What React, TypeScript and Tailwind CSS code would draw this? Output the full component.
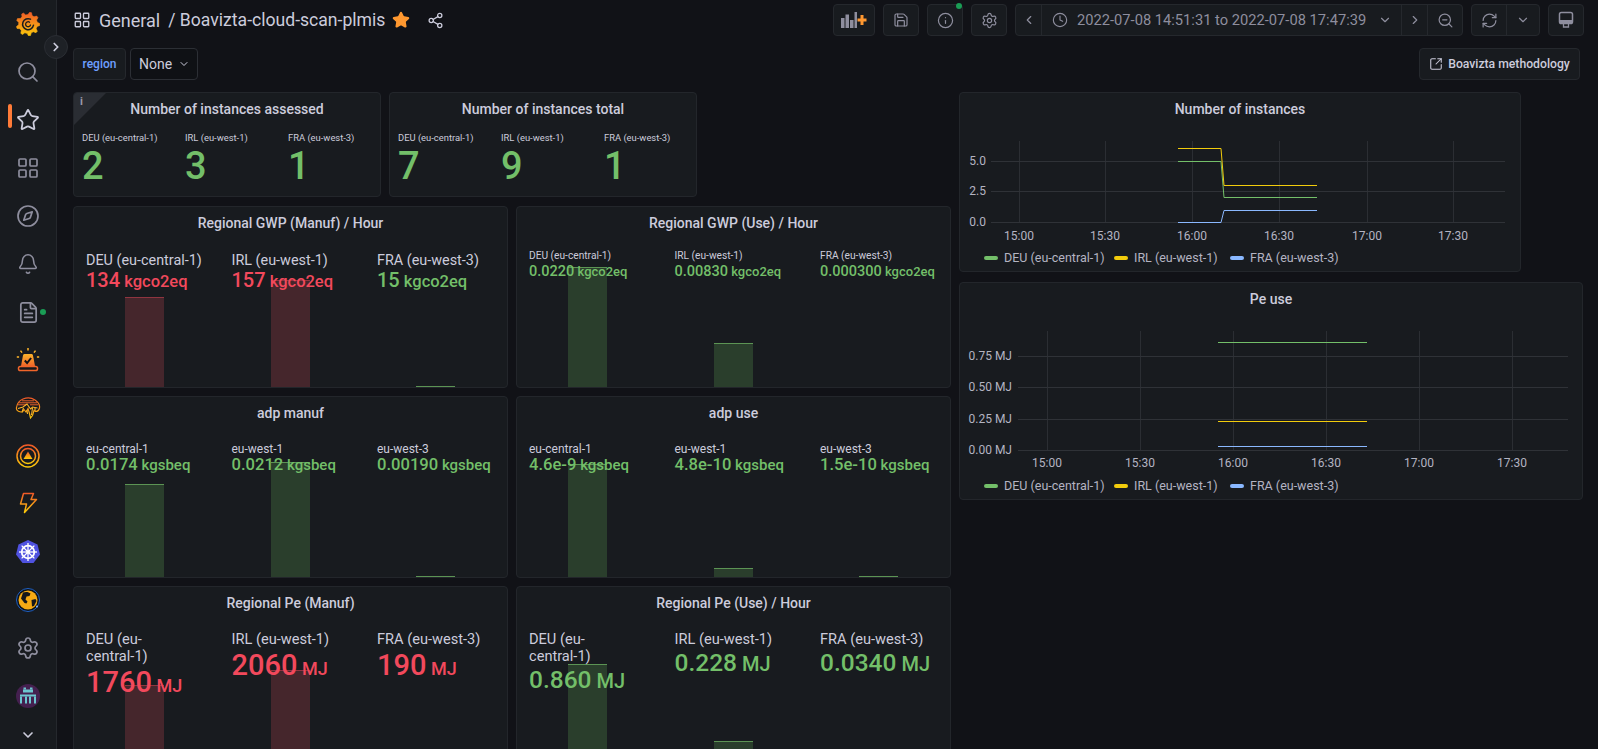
import React from "react";
import {
  LayoutGrid, Search, Star, Compass, Bell, FileText, Settings, ChevronRight, ChevronDown, ChevronLeft,
  Share2, Save, Info, Clock, ZoomOut, RefreshCw, SquareArrowOutUpRight,
} from "lucide-react";

const GREEN = "#73bf69";
const RED = "#f2495c";
const YELLOW = "#f2cc0c";
const BLUE = "#8ab8ff";

function GradDef({ id }: { id: string }) {
  return (
    <defs>
      <linearGradient id={id} x1="0" y1="1" x2="0" y2="0">
        <stop offset="0" stopColor="#fbca0a" />
        <stop offset="1" stopColor="#f05a28" />
      </linearGradient>
    </defs>
  );
}

function GrafanaLogo() {
  const pts: string[] = [];
  const n = 9;
  for (let i = 0; i < n; i++) {
    const a = (i / n) * Math.PI * 2 - 1.35;
    const step = (Math.PI * 2) / n;
    const p = (r: number, d: number) => `${(12 + r * Math.cos(a + d * step)).toFixed(2)},${(12 + r * Math.sin(a + d * step)).toFixed(2)}`;
    pts.push(p(9.4, -0.32), p(11.8, -0.12), p(11.8, 0.12), p(9.4, 0.32));
  }
  return (
    <svg width="24" height="24" viewBox="0 0 24 24">
      <defs>
        <linearGradient id="gl" gradientUnits="userSpaceOnUse" x1="12" y1="24" x2="12" y2="0">
          <stop offset="0" stopColor="#fbca0a" />
          <stop offset="1" stopColor="#f05a28" />
        </linearGradient>
      </defs>
      <polygon points={pts.join(" ")} fill="url(#gl)" stroke="url(#gl)" strokeWidth="0.6" strokeLinejoin="round" />
      <path d="M14.500 7.200A5.500 5.500 0 1 0 17.500 13.200" fill="none" stroke="#1a1c20" strokeWidth="1.500" strokeLinecap="round" />
      <path d="M13.600 10.200A2.500 2.500 0 1 0 14.500 13" fill="none" stroke="#1a1c20" strokeWidth="1.300" strokeLinecap="round" />
    </svg>
  );
}

function AlertIcon() {
  return (
    <svg width="24" height="24" viewBox="0 0 24 24">
      <defs>
        <linearGradient id="al" x1="0" y1="0" x2="0" y2="1">
          <stop offset="0" stopColor="#fbb42a" />
          <stop offset="1" stopColor="#f0652a" />
        </linearGradient>
      </defs>
      <path d="M8.500 6h7a1.500 1.500 0 0 1 1.400 1.100L19 18H5L7.100 7.100A1.500 1.500 0 0 1 8.500 6z" fill="url(#al)" />
      <rect x="2.500" y="18.500" width="19" height="4" rx="1.800" fill="#15171b" stroke="#f0652a" strokeWidth="1.500" />
      <path d="M8.800 12.500l2.300 2.500 4-5" stroke="#111217" strokeWidth="2" fill="none" />
      <path d="M12 0v2.600M4.500 2.600l1.500 2M19.500 2.600l-1.500 2M0.800 9h2.300M20.900 9h2.300" stroke="#fbb42a" strokeWidth="1.500" />
    </svg>
  );
}

function BrainIcon() {
  return (
    <svg width="26" height="24" viewBox="0 0 26 24">
      <GradDef id="br" />
      <path
        d="M6 16c-3 0-5-2-4.500-4.500C2 8 3 5 8 3c4-1.500 9-1 12 1 3 2 5 5 4.500 8-.5 2-2 3.500-4 3.500l-1.500-1-1.500 5-2 2.500-1-4.500-1.500-5-2 3.500-2-2.500-1.500 2.500z"
        fill="#15171b"
        stroke="url(#br)"
        strokeWidth="1.200"
      />
      <path d="M7 4.800h12M4 6.800h18M3 8.800h8M15 8.800h8" stroke="#e8622c" strokeWidth="1" />
      <path d="M3 12.500l5-1.500 4-3 3.500 5 2-2 5 1M7 16l1.500-4M12 14l.5 4M16.500 19l1-7M20 15l0-3" fill="none" stroke="#fbb42a" strokeWidth="1.100" />
    </svg>
  );
}

function TriangleIcon() {
  return (
    <svg width="24" height="24" viewBox="0 0 24 24">
      <GradDef id="tr" />
      <circle cx="12" cy="12" r="11" fill="none" stroke="url(#tr)" strokeWidth="1.500" />
      <circle cx="12" cy="12" r="7.500" fill="none" stroke="url(#tr)" strokeWidth="1.500" />
      <path d="M12 7.500l4.500 7.500h-9z" fill="url(#tr)" />
    </svg>
  );
}

function BoltIcon() {
  return (
    <svg width="24" height="24" viewBox="0 0 24 24">
      <GradDef id="bo" />
      <path d="M7.500 1.500h10l-2.500 6h5.500L8.500 20.500l2-8.500H4.500z" fill="none" stroke="url(#bo)" strokeWidth="1.500" strokeLinejoin="round" />
    </svg>
  );
}

function KubeIcon() {
  const spokes = [0, 1, 2, 3, 4, 5, 6, 7].map((i) => (i / 8) * Math.PI * 2);
  return (
    <svg width="24" height="24" viewBox="0 0 24 24">
      <polygon points="12,0 21.500,4.500 24,14.500 17.500,23 6.500,23 0,14.500 2.500,4.500" fill="#4f52e0" />
      <circle cx="12" cy="12" r="6.300" fill="none" stroke="#fff" strokeWidth="1.800" />
      {spokes.map((a, i) => (
        <line key={i} x1={12} y1={12} x2={12 + 9 * Math.cos(a)} y2={12 + 9 * Math.sin(a)} stroke="#fff" strokeWidth="1.300" />
      ))}
      <circle cx="12" cy="12" r="1.800" fill="#fff" />
    </svg>
  );
}

function GlobeIcon() {
  return (
    <svg width="24" height="24" viewBox="0 0 24 24">
      <circle cx="12" cy="12" r="11.500" fill="#0e1216" stroke="#1f60c4" strokeWidth="1" />
      <circle cx="12" cy="12" r="9.500" fill="#f5a914" />
      <path d="M7 4.500c3-1 6-.5 7.500 1l-1 2.500-3 .5-1 3 2 2-1 2-2-.5-3.500-4.500zM15.500 12l4-1 1 2-2.500 5-2 .5z" fill="#15171b" />
      <circle cx="21" cy="18.500" r="1" fill="#8ab8ff" />
    </svg>
  );
}

function InvaderIcon() {
  return (
    <svg width="24" height="24" viewBox="0 0 24 24">
      <circle cx="12" cy="12" r="12" fill="#44204f" />
      <g fill="#6cc6cf">
        <rect x="7.500" y="3.500" width="2.500" height="2" />
        <rect x="14" y="3.500" width="2.500" height="2" />
        <rect x="7" y="5.500" width="10" height="3" />
        <rect x="4" y="10.500" width="16" height="2" />
        <rect x="4" y="12.500" width="2" height="7" />
        <rect x="18" y="12.500" width="2" height="7" />
        <rect x="9" y="12.500" width="2" height="7" />
        <rect x="13" y="12.500" width="2" height="7" />
      </g>
    </svg>
  );
}

function TvIcon() {
  return (
    <svg width="18" height="18" viewBox="0 0 18 18" fill="none" stroke="currentColor">
      <rect x="2.500" y="1.500" width="13" height="11" rx="1.800" strokeWidth="1.500" />
      <rect x="3" y="9" width="12" height="3.500" fill="currentColor" stroke="none" />
      <path d="M6.500 13v3h5v-3" strokeWidth="1.300" />
    </svg>
  );
}

function AddPanelIcon() {
  return (
    <svg width="26" height="16" viewBox="0 0 26 16">
      <g fill="#8e8e9e">
        <rect x="0" y="6" width="3.500" height="10" />
        <rect x="4.500" y="2.500" width="3.500" height="13.500" />
        <rect x="9" y="8" width="3.500" height="8" />
        <rect x="13.500" y="0" width="2.500" height="16" />
      </g>
      <path d="M21 3v10M16.500 8h9" stroke="#ff9830" strokeWidth="3" />
    </svg>
  );
}

function SideItem({ children }: { children: React.ReactNode }) {
  return <div className="h-12 shrink-0 flex items-center justify-center relative">{children}</div>;
}

function Sidebar() {
  const c = "text-[#8e8e9e]";
  return (
    <aside className="w-[57px] shrink-0 h-full bg-[#181b1f] border-r border-[#25282d] flex flex-col overflow-hidden">
      <SideItem><GrafanaLogo /></SideItem>
      <SideItem><Search size={24} strokeWidth={1.7} className={c} /></SideItem>
      <SideItem>
        <div className="absolute left-2 top-2 w-1 h-6 rounded-sm bg-[#ff7b38]" />
        <Star size={24} strokeWidth={1.8} className="text-[#ccccdc]" />
      </SideItem>
      <SideItem><LayoutGrid size={24} strokeWidth={1.7} className={c} /></SideItem>
      <SideItem><Compass size={24} strokeWidth={1.7} className={c} /></SideItem>
      <SideItem><Bell size={22} strokeWidth={1.7} className={c} /></SideItem>
      <SideItem>
        <FileText size={23} strokeWidth={1.8} className={c} />
        <div className="absolute left-10 top-[21px] w-1.5 h-1.5 rounded-full bg-[#1a9d55]" />
      </SideItem>
      <SideItem><AlertIcon /></SideItem>
      <SideItem><BrainIcon /></SideItem>
      <SideItem><TriangleIcon /></SideItem>
      <SideItem><BoltIcon /></SideItem>
      <SideItem><KubeIcon /></SideItem>
      <SideItem><GlobeIcon /></SideItem>
      <SideItem><Settings size={24} strokeWidth={1.7} className={c} /></SideItem>
      <SideItem><InvaderIcon /></SideItem>
      <div className="flex-1 flex items-center justify-center">
        <ChevronDown size={16} strokeWidth={2.5} className="text-[#ccccdc]" />
      </div>
    </aside>
  );
}

function IconBtn({ children, w = "w-9" }: { children: React.ReactNode; w?: string }) {
  return (
    <div className={`${w} h-8 flex items-center justify-center bg-[#181b1f] border border-[#25282d] rounded-sm text-[#8e8e9e] relative shrink-0`}>
      {children}
    </div>
  );
}

function TopBar() {
  return (
    <div className="h-10 shrink-0 flex items-center pl-4 pr-[14px]">
      <LayoutGrid size={18} strokeWidth={1.8} className="text-[#ccccdc]" />
      <span className="ml-2 text-[18px] text-[#ccccdc]">General</span>
      <span className="ml-2 text-[17.6px] text-[#ccccdc]">/ Boavizta-cloud-scan-plmis</span>
      <Star size={18} className="ml-[7px] text-[#ff9830]" fill="#ff9830" />
      <Share2 size={17} strokeWidth={1.8} className="ml-[17px] text-[#ccccdc]" />
      <div className="flex-1" />
      <div className="flex gap-2 items-center">
        <IconBtn w="w-[42px]"><AddPanelIcon /></IconBtn>
        <IconBtn><Save size={16} strokeWidth={1.8} /></IconBtn>
        <IconBtn>
          <Info size={17} strokeWidth={1.7} />
          <div className="absolute -top-[2px] right-0 w-[6px] h-[6px] rounded-full bg-[#1a9d55]" />
        </IconBtn>
        <IconBtn><Settings size={17} strokeWidth={1.7} /></IconBtn>
        <div className="flex h-8 w-[448px] bg-[#181b1f] border border-[#25282d] rounded-sm text-[#8e8e9e] items-center">
          <div className="w-[26px] h-full flex items-center justify-center border-r border-[#25282d]">
            <ChevronLeft size={14} />
          </div>
          <div className="w-[359px] h-full flex items-center pl-[10px] text-[14.7px] whitespace-nowrap">
            <Clock size={16} strokeWidth={1.7} className="mr-[9px]" />
            <span>2022-07-08 14:51:31 to 2022-07-08 17:47:39</span>
            <ChevronDown size={14} className="ml-[12px]" />
          </div>
          <div className="w-[27px] h-full flex items-center justify-center border-l border-r border-[#25282d]">
            <ChevronRight size={14} />
          </div>
          <div className="flex-1 flex items-center justify-center">
            <ZoomOut size={17} strokeWidth={1.7} />
          </div>
        </div>
        <div className="flex h-8 w-[69px] bg-[#181b1f] border border-[#25282d] rounded-sm text-[#8e8e9e] items-center">
          <div className="w-[35px] h-full flex items-center justify-center border-r border-[#25282d]">
            <RefreshCw size={17} strokeWidth={1.7} />
          </div>
          <div className="flex-1 flex items-center justify-center"><ChevronDown size={14} /></div>
        </div>
        <IconBtn><TvIcon /></IconBtn>
      </div>
    </div>
  );
}

function VarRow() {
  return (
    <div className="h-8 mt-2 shrink-0 flex items-center pl-4 pr-[18px] text-[#ccccdc]">
      <div className="w-[53px] h-8 flex items-center justify-center bg-[#181b1f] border border-[#25282d] rounded-sm text-[12px] font-medium text-[#6e9fff]">
        region
      </div>
      <div className="ml-1 w-[68px] h-8 flex items-center pl-2 bg-[#0f1115] border border-[#2c2f35] rounded-sm text-[14px]">
        None
        <ChevronDown size={12} className="ml-[6px]" />
      </div>
      <div className="flex-1" />
      <div className="h-8 w-[161px] flex items-center justify-center gap-[5px] bg-[#181b1f] border border-[#25282d] rounded-sm text-[12.2px] font-medium">
        <SquareArrowOutUpRight size={14} strokeWidth={1.8} />
        Boavizta methodology
      </div>
    </div>
  );
}

function PanelTitle({ children }: { children: React.ReactNode }) {
  return <div className="h-8 shrink-0 flex items-end justify-center pb-[6px] text-[14px] leading-5 font-medium text-[#ccccdc]">{children}</div>;
}

type Item = { label: React.ReactNode; value: string; unit?: string; color: string; bar?: number };
type Size = { body: string; label: string; line: string; val: string; unit: string };

const COLS = ["DEU (eu-central-1)", "IRL (eu-west-1)", "FRA (eu-west-3)"];
const DEU_WRAP = (
  <>
    DEU (eu-<span className="whitespace-nowrap">central-1)</span>
  </>
);

function Bar({ h, color }: { h: number; color: string }) {
  const red = color === RED;
  return (
    <div
      className={`absolute bottom-0 left-[39px] w-[39px] border-t ${red ? "bg-[#45262c] border-[#8f3540]" : "bg-[#2a3e2c] border-[#5c9454]"}`}
      style={{ height: h }}
    />
  );
}

function BarStat({ title, items, size }: { title: string; items: Item[]; size: Size }) {
  return (
    <section className="h-[182px] shrink-0 flex-1 min-w-0 flex flex-col bg-[#181b1f] border border-[#23262b] rounded-sm overflow-hidden">
      <PanelTitle>{title}</PanelTitle>
      <div className="flex-1 grid grid-cols-[145.500px_145.500px_1fr] pl-3 pr-2">
        {items.map((it) => (
          <div key={it.value} className="relative">
            {it.bar ? <Bar h={it.bar} color={it.color} /> : null}
            <div className={`relative ${size.body}`}>
              <div className={`text-[#ccccdc] ${size.label}`}>{it.label}</div>
              <div className={`whitespace-nowrap font-medium ${size.line}`} style={{ color: it.color }}>
                <span className={size.val}>{it.value}</span>
                <span className={size.unit}> {it.unit}</span>
              </div>
            </div>
          </div>
        ))}
      </div>
    </section>
  );
}

function CountStat({ title, values, info }: { title: string; values: string[]; info?: boolean }) {
  return (
    <section className="relative w-[308px] h-[105px] shrink-0 flex flex-col bg-[#181b1f] border border-[#23262b] rounded-sm overflow-hidden">
      {info ? (
        <>
          <div className="absolute left-0 top-0 w-8 h-8 bg-[#2a2d33] [clip-path:polygon(0_0,100%_0,0_100%)]" />
          <span className="absolute left-[6px] top-[2px] text-[11px] leading-[14px] font-bold text-[#9a9aa8]">i</span>
        </>
      ) : null}
      <PanelTitle>{title}</PanelTitle>
      <div className="grid grid-cols-[103px_103px_1fr] pl-[8px] pt-[6px]">
        {values.map((v, i) => (
          <div key={COLS[i]}>
            <div className="text-[9.400px] leading-[14px] text-[#ccccdc]">{COLS[i]}</div>
            <div className="text-[38px] leading-[42px] font-medium" style={{ color: GREEN }}>{v}</div>
          </div>
        ))}
      </div>
    </section>
  );
}

type ChartLine = { color: string; points: [number, number][] };
type ChartProps = {
  title: string;
  width: string;
  svgW: number;
  svgH: number;
  vgrid: number[];
  hgrid: { y: number; label: string }[];
  gridX: [number, number];
  gridTop: number;
  labelRight: number;
  timeY: number;
  lines: ChartLine[];
};

const TIMES = ["15:00", "15:30", "16:00", "16:30", "17:00", "17:30"];
const LEG = [
  { t: "DEU (eu-central-1)", c: GREEN, w: "w-[130px]" },
  { t: "IRL (eu-west-1)", c: YELLOW, w: "w-[116px]" },
  { t: "FRA (eu-west-3)", c: BLUE, w: "" },
];

function Chart({ title, width, svgW, svgH, vgrid, hgrid, gridX, gridTop, labelRight, timeY, lines }: ChartProps) {
  const bottom = hgrid[hgrid.length - 1].y;
  return (
    <section className={`${width} flex flex-col bg-[#181b1f] border border-[#23262b] rounded-sm overflow-hidden`}>
      <PanelTitle>{title}</PanelTitle>
      <svg width={svgW} height={svgH} className="block shrink-0">
        {vgrid.map((x) => (
          <line key={x} x1={x + 0.5} x2={x + 0.5} y1={gridTop} y2={bottom} stroke="#2b2e33" />
        ))}
        {hgrid.map((g) => (
          <line key={g.y} x1={gridX[0]} x2={gridX[1]} y1={g.y + 0.5} y2={g.y + 0.5} stroke="#2f3237" />
        ))}
        {hgrid.map((g) => (
          <text key={g.label} x={labelRight} y={g.y + 4} textAnchor="end" fontSize="12" fill="#b4b4c2" fontFamily="Roboto, sans-serif">
            {g.label}
          </text>
        ))}
        {vgrid.map((x, i) => (
          <text key={i} x={x} y={timeY} textAnchor="middle" fontSize="12" fill="#b4b4c2" fontFamily="Roboto, sans-serif">
            {TIMES[i]}
          </text>
        ))}
        {lines.map((l) => (
          <polyline key={l.color} points={l.points.map((p) => `${p[0]},${p[1] + 0.5}`).join(" ")} fill="none" stroke={l.color} strokeWidth="1" />
        ))}
      </svg>
      <div className="flex items-center pl-6 h-5 text-[12.500px] text-[#b4b4c2] shrink-0">
        {LEG.map((l) => (
          <div key={l.t} className={`flex items-center ${l.w}`}>
            <i className="w-[14px] h-1 rounded-sm mr-[6px]" style={{ background: l.c }} />
            {l.t}
          </div>
        ))}
      </div>
    </section>
  );
}

const S_BIG: Size = { body: "pt-[13px]", label: "text-[14.400px] leading-[18px]", line: "leading-[20px]", val: "text-[20px]", unit: "text-[16.500px]" };
const S_SM: Size = { body: "pt-[11px]", label: "text-[10.200px] leading-[12px]", line: "leading-[18px]", val: "text-[14.500px]", unit: "text-[13px]" };
const S_MD: Size = { body: "pt-[13px]", label: "text-[12px] leading-[15px]", line: "leading-[16px]", val: "text-[16.600px]", unit: "text-[15px]" };
const S_PE: Size = { body: "pt-3", label: "max-w-[105px] text-[14.600px] leading-[17px]", line: "leading-[35px]", val: "text-[29px]", unit: "text-[18px]" };
const S_PEU: Size = { body: "pt-3", label: "max-w-[105px] text-[14.600px] leading-[17px]", line: "leading-[30px]", val: "text-[24.500px]", unit: "text-[20px]" };

export default function App() {
  return (
    <div className="relative flex w-[1598px] h-[749px] overflow-hidden bg-[#111217] [font-family:Roboto,sans-serif] text-[#ccccdc]">
      <Sidebar />
      <div className="absolute left-[44px] top-[35px] w-6 h-6 rounded-full bg-[#1e2126] border border-[#2a2d33] flex items-center justify-center text-[#ccccdc]">
        <ChevronRight size={14} strokeWidth={3} />
      </div>
      <main className="flex-1 min-w-0 flex flex-col">
        <TopBar />
        <VarRow />
        <div className="flex gap-2 pl-4 pt-3">
          <div className="w-[878px] shrink-0 flex flex-col gap-2">
            <div className="flex gap-2 mb-[1px]">
              <CountStat title="Number of instances assessed" values={["2", "3", "1"]} info />
              <CountStat title="Number of instances total" values={["7", "9", "1"]} />
            </div>
            <div className="flex gap-2">
              <BarStat title="Regional GWP (Manuf) / Hour" size={S_BIG} items={[
                { label: COLS[0], value: "134", unit: "kgco2eq", color: RED, bar: 90 },
                { label: COLS[1], value: "157", unit: "kgco2eq", color: RED, bar: 107 },
                { label: COLS[2], value: "15", unit: "kgco2eq", color: GREEN, bar: 1 },
              ]} />
              <BarStat title="Regional GWP (Use) / Hour" size={S_SM} items={[
                { label: COLS[0], value: "0.0220", unit: "kgco2eq", color: GREEN, bar: 120 },
                { label: COLS[1], value: "0.00830", unit: "kgco2eq", color: GREEN, bar: 44 },
                { label: COLS[2], value: "0.000300", unit: "kgco2eq", color: GREEN },
              ]} />
            </div>
            <div className="flex gap-2">
              <BarStat title="adp manuf" size={S_MD} items={[
                { label: "eu-central-1", value: "0.0174", unit: "kgsbeq", color: GREEN, bar: 93 },
                { label: "eu-west-1", value: "0.0212", unit: "kgsbeq", color: GREEN, bar: 115 },
                { label: "eu-west-3", value: "0.00190", unit: "kgsbeq", color: GREEN, bar: 1 },
              ]} />
              <BarStat title="adp use" size={S_MD} items={[
                { label: "eu-central-1", value: "4.6e-9", unit: "kgsbeq", color: GREEN, bar: 113 },
                { label: "eu-west-1", value: "4.8e-10", unit: "kgsbeq", color: GREEN, bar: 9 },
                { label: "eu-west-3", value: "1.5e-10", unit: "kgsbeq", color: GREEN, bar: 1 },
              ]} />
            </div>
            <div className="flex gap-2">
              <BarStat title="Regional Pe (Manuf)" size={S_PE} items={[
                { label: DEU_WRAP, value: "1760", unit: "MJ", color: RED, bar: 82 },
                { label: COLS[1], value: "2060", unit: "MJ", color: RED, bar: 97 },
                { label: COLS[2], value: "190", unit: "MJ", color: RED },
              ]} />
              <BarStat title="Regional Pe (Use) / Hour" size={S_PEU} items={[
                { label: DEU_WRAP, value: "0.860", unit: "MJ", color: GREEN, bar: 103 },
                { label: COLS[1], value: "0.228", unit: "MJ", color: GREEN, bar: 26 },
                { label: COLS[2], value: "0.0340", unit: "MJ", color: GREEN, bar: 4 },
              ]} />
            </div>
          </div>
          <div className="flex-1 flex flex-col gap-[10px]">
            <Chart
              title="Number of instances"
              width="w-[562px] h-[180px]"
              svgW={560}
              svgH={123}
              vgrid={[59, 145, 232, 319, 407, 493]}
              hgrid={[{ y: 36, label: "5.0" }, { y: 66, label: "2.5" }, { y: 97, label: "0.0" }]}
              gridX={[31, 545]}
              gridTop={16}
              labelRight={26}
              timeY={115}
              lines={[
                { color: GREEN, points: [[218, 36], [261, 36], [264, 72], [357, 72]] },
                { color: YELLOW, points: [[218, 23], [261, 23], [264, 60], [357, 60]] },
                { color: BLUE, points: [[218, 97], [261, 97], [264, 85], [357, 85]] },
              ]}
            />
            <Chart
              title="Pe use"
              width="w-[624px] h-[218px]"
              svgW={622}
              svgH={161}
              vgrid={[87, 180, 273, 366, 459, 552]}
              hgrid={[{ y: 41, label: "0.75 MJ" }, { y: 72, label: "0.50 MJ" }, { y: 104, label: "0.25 MJ" }, { y: 135, label: "0.00 MJ" }]}
              gridX={[58, 608]}
              gridTop={16}
              labelRight={52}
              timeY={152}
              lines={[
                { color: GREEN, points: [[258, 27], [407, 27]] },
                { color: YELLOW, points: [[258, 106], [407, 106]] },
                { color: BLUE, points: [[258, 131], [407, 131]] },
              ]}
            />
          </div>
        </div>
      </main>
    </div>
  );
}
